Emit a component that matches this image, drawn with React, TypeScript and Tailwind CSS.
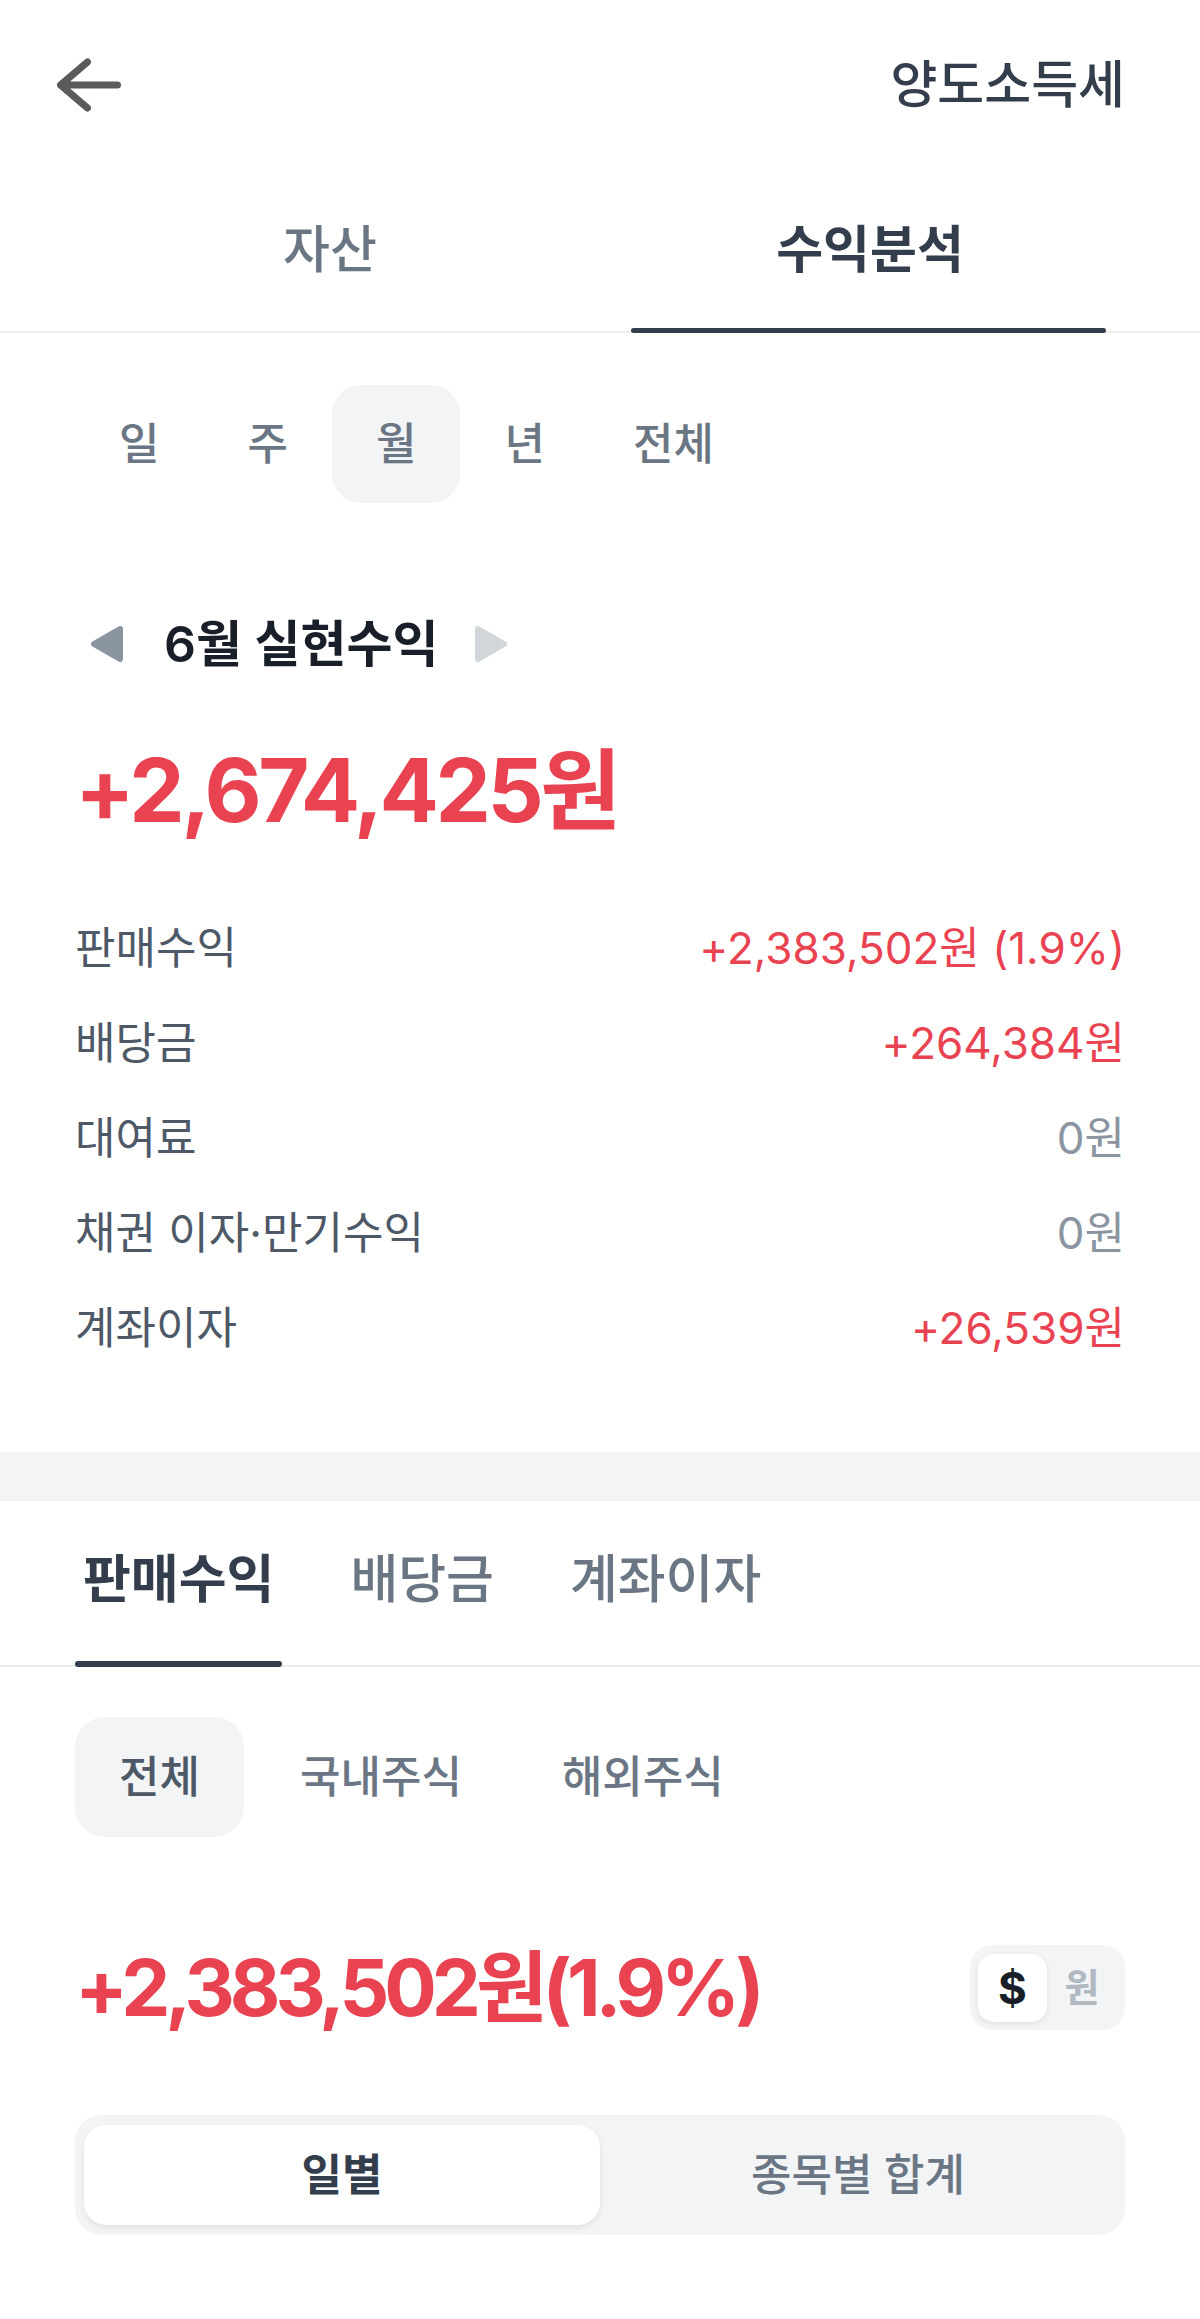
import { useState } from "react";

const periods = ["일", "주", "월", "년", "전체"];

const breakdown = [
  { label: "판매수익", value: "+2,383,502원 (1.9%)", positive: true },
  { label: "배당금", value: "+264,384원", positive: true },
  { label: "대여료", value: "0원", positive: false },
  { label: "채권 이자·만기수익", value: "0원", positive: false },
  { label: "계좌이자", value: "+26,539원", positive: true },
];

const incomeTabs = ["판매수익", "배당금", "계좌이자"];
const markets = ["전체", "국내주식", "해외주식"];

function BackArrow() {
  return (
    <svg width="64" height="54" viewBox="0 0 64 54" fill="none">
      <path
        d="M60.5 27H4M30.5 4L3.5 27L30.5 50"
        stroke="#5b5b5b"
        strokeWidth="7"
        strokeLinecap="round"
        strokeLinejoin="round"
      />
    </svg>
  );
}

function Caret({ dir, color }: { dir: "left" | "right"; color: string }) {
  const d = dir === "left" ? "M30 4L4 19L30 34Z" : "M4 4L30 19L4 34Z";
  return (
    <svg width="34" height="38" viewBox="0 0 34 38">
      <path d={d} fill={color} stroke={color} strokeWidth="6" strokeLinejoin="round" />
    </svg>
  );
}

export default function App() {
  const [mainTab, setMainTab] = useState(1);
  const [period, setPeriod] = useState(2);
  const [incomeTab, setIncomeTab] = useState(0);
  const [market, setMarket] = useState(0);
  const [currency, setCurrency] = useState<"usd" | "krw">("usd");
  const [view, setView] = useState(0);

  return (
    <div className="min-h-[2319px] bg-white font-['Inter','Noto_Sans_CJK_KR',sans-serif]">
      {/* Header */}
      <header className="flex h-[170px] items-center justify-between pl-[57px] pr-[75px]">
        <button>
          <BackArrow />
        </button>
        <span className="text-[51px] font-medium text-[#333d4b]">양도소득세</span>
      </header>

      {/* 자산 / 수익분석 */}
      <nav className="flex h-[163px] border-b-2 border-[#eceef0] px-[60px]">
        {["자산", "수익분석"].map((t, i) => (
          <button
            key={t}
            onClick={() => setMainTab(i)}
            className={`relative flex flex-1 items-center justify-center text-[51px] ${
              mainTab === i ? "font-bold text-[#333d4b]" : "font-medium text-[#6b7684]"
            }`}
          >
            {t}
            {mainTab === i && (
              <span className="absolute bottom-[-2px] left-[31px] right-[34px] h-[5px] rounded-full bg-[#333d4b]" />
            )}
          </button>
        ))}
      </nav>

      <section className="px-[75px]">
        {/* 기간 선택 */}
        <div className="mt-[52px] flex">
          {periods.map((p, i) => (
            <button
              key={p}
              onClick={() => setPeriod(i)}
              className={`h-[118px] rounded-[30px] px-[44px] text-[44px] font-medium text-[#6b7684] ${
                period === i ? "bg-[#f2f4f6]" : ""
              }`}
            >
              {p}
            </button>
          ))}
        </div>

        {/* 월 이동 */}
        <div className="mt-[111px] flex h-[60px] items-center pl-[15px]">
          <Caret dir="left" color="#8b95a1" />
          <h2 className="ml-[40px] mr-[35px] text-[50px] font-semibold text-[#191f28]">6월 실현수익</h2>
          <Caret dir="right" color="#d1d6db" />
        </div>

        <p className="mt-[66px] h-[100px] text-[88px] font-bold leading-[100px] tracking-[-0.04em] text-[#e94352]">
          +2,674,425원
        </p>

        {/* 수익 항목 */}
        <ul className="mt-[60px]">
          {breakdown.map((row) => (
            <li key={row.label} className="flex h-[95px] items-center justify-between">
              <span className="text-[44px] text-[#4e5968]">{row.label}</span>
              <span className={`text-[44px] ${row.positive ? "text-[#e94352]" : "text-[#8b95a1]"}`}>
                {row.value}
              </span>
            </li>
          ))}
        </ul>
      </section>

      <div className="mt-[77px] h-[49px] bg-[#f2f4f6]" />

      {/* 수익 구분 탭 */}
      <nav className="flex h-[166px] gap-[60px] border-b-2 border-[#eceef0] px-[75px]">
        {incomeTabs.map((t, i) => (
          <button
            key={t}
            onClick={() => setIncomeTab(i)}
            className={`relative flex items-center px-2 pb-[6px] text-[52px] ${
              incomeTab === i ? "font-bold text-[#333d4b]" : "font-medium text-[#6b7684]"
            }`}
          >
            {t}
            {incomeTab === i && (
              <span className="absolute bottom-[-2px] left-0 right-0 h-[6px] rounded-full bg-[#333d4b]" />
            )}
          </button>
        ))}
      </nav>

      <section className="px-[75px]">
        <div className="mt-[50px] flex gap-3">
          {markets.map((m, i) => (
            <button
              key={m}
              onClick={() => setMarket(i)}
              className={`h-[120px] rounded-[30px] px-[44px] text-[44px] font-medium ${
                market === i ? "bg-[#f2f4f6] text-[#4e5968]" : "text-[#6b7684]"
              }`}
            >
              {m}
            </button>
          ))}
        </div>

        <div className="mt-[108px] flex h-[85px] items-center justify-between">
          <p className="text-[78px] font-bold tracking-[-0.065em] text-[#e94352]">+2,383,502원(1.9%)</p>
          <div className="flex h-[85px] w-[155px] items-center rounded-[22px] bg-[#f2f4f6] px-[8px]">
            <button
              onClick={() => setCurrency("usd")}
              className={`flex h-[68px] w-[69px] items-center justify-center rounded-[16px] text-[44px] font-bold ${
                currency === "usd" ? "bg-white text-[#191f28] shadow-[0_2px_6px_rgba(0,0,0,0.08)]" : "text-[#b0b8c1]"
              }`}
            >
              $
            </button>
            <button
              onClick={() => setCurrency("krw")}
              className={`flex h-[68px] flex-1 items-center justify-center rounded-[16px] text-[38px] font-bold ${
                currency === "krw" ? "bg-white text-[#191f28]" : "text-[#b0b8c1]"
              }`}
            >
              원
            </button>
          </div>
        </div>

        {/* 일별 / 종목별 합계 */}
        <div className="mt-[85px] flex h-[120px] rounded-[26px] bg-[#f2f4f6] px-[9px] py-[10px]">
          {["일별", "종목별 합계"].map((v, i) => (
            <button
              key={v}
              onClick={() => setView(i)}
              className={`flex-1 rounded-[22px] text-[44px] ${
                view === i
                  ? "bg-white font-bold text-[#333d4b] shadow-[0_3px_6px_rgba(0,0,0,0.08)]"
                  : "font-medium text-[#6b7684]"
              }`}
            >
              {v}
            </button>
          ))}
        </div>
      </section>
    </div>
  );
}
